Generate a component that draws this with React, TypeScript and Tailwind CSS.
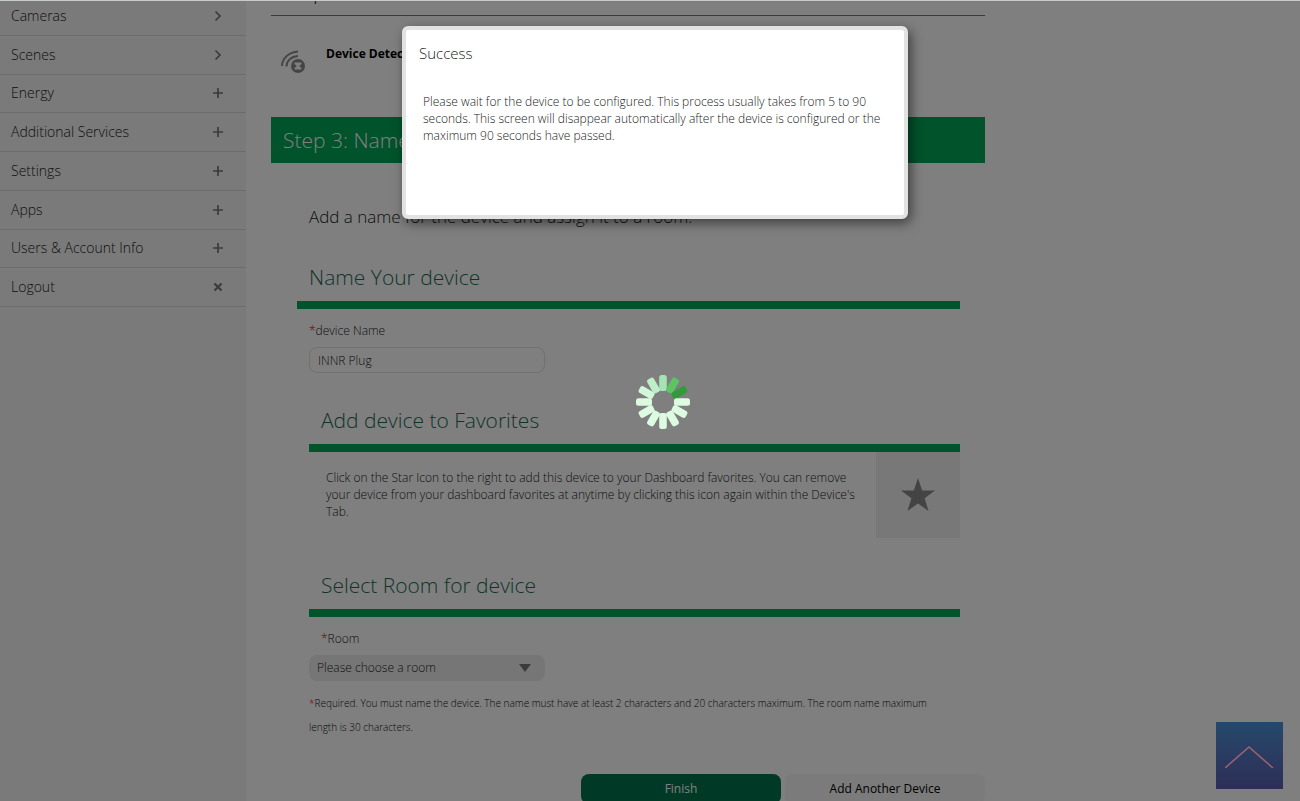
import React from 'react';

type MenuIcon = 'chevron' | 'plus' | 'close';

interface MenuItem {
  label: string;
  icon: MenuIcon;
}

const menuItems: MenuItem[] = [
  { label: 'Cameras', icon: 'chevron' },
  { label: 'Scenes', icon: 'chevron' },
  { label: 'Energy', icon: 'plus' },
  { label: 'Additional Services', icon: 'plus' },
  { label: 'Settings', icon: 'plus' },
  { label: 'Apps', icon: 'plus' },
  { label: 'Users & Account Info', icon: 'plus' },
  { label: 'Logout', icon: 'close' },
];

const iconPaths: Record<MenuIcon, string> = {
  chevron: 'M3.5 1.5 8 6l-4.5 4.5',
  plus: 'M6 1v10M1 6h10',
  close: 'M2.5 2.5l7 7M9.5 2.5l-7 7',
};

// Clockwise from the top, the darkest blade leads
const spinnerColors = [
  '#a6e3b4', '#5cc463', '#339a3c', '#dcfbe0', '#dcfbe0', '#dcfbe0',
  '#dcfbe0', '#dcfbe0', '#dcfbe0', '#dcfbe0', '#d2f7d8', '#bdeec8',
];

const Sidebar: React.FC = () => (
  <nav className="w-[246px] shrink-0 bg-[#f4f4f4]">
    <ul className="-mt-1 flex h-[310px] flex-col">
      {menuItems.map((item) => (
        <li key={item.label} className="flex-1 border-b border-[#d8d8d8]">
          <a href="#" className="flex h-full items-center justify-between pl-[11px] pr-[22px] text-sm font-light text-[#222]">
            {item.label}
            <svg className="h-3 w-3" viewBox="0 0 12 12" fill="none" stroke="#777" strokeWidth={item.icon === 'close' ? 2.2 : 1.7}>
              <path d={iconPaths[item.icon]} />
            </svg>
          </a>
        </li>
      ))}
    </ul>
  </nav>
);

const DetectIcon: React.FC = () => (
  <svg className="mt-[34px] h-6 w-[25px] shrink-0" viewBox="0 0 25 24" fill="none">
    <path d="M1 16C1 8.5 8 2 17 1.5" stroke="#8a8a8a" strokeWidth="2" />
    <path d="M5.500 16.500C5.500 11 10 6.500 17 6" stroke="#8a8a8a" strokeWidth="2" />
    <circle cx="17" cy="16" r="7" fill="#8a8a8a" />
    <path d="M13.500 12.500h7v1.500l-2.300 2 2.300 2v1.500h-7V18l2.300-2-2.300-2z" fill="#fff" />
  </svg>
);

interface SectionTitleProps {
  children: React.ReactNode;
  className?: string;
}

const SectionTitle: React.FC<SectionTitleProps> = ({ children, className = '' }) => (
  <h2 className={`mt-[33px] h-[46px] border-b-8 border-[#00a656] pl-3 text-[21px] leading-7 font-light text-[#1d6b52] ${className}`}>
    {children}
  </h2>
);

const Spinner: React.FC = () => (
  <svg className="h-14 w-14" viewBox="-28 -28 56 56" role="status">
    {spinnerColors.map((color, i) => (
      <rect key={i} x="-3.8" y="-27" width="7.600" height="16" rx="2.500" fill={color} transform={`rotate(${i * 30})`} />
    ))}
  </svg>
);

const DeviceForm: React.FC = () => (
  <main className="ml-[25px] w-full max-w-[714px]">
    <div className="flex h-[15px] items-end overflow-hidden border-b border-[#777] pl-3">
      <h2 className="mb-[10px] text-[21px] leading-7 font-light text-[#222]">Step 2</h2>
    </div>

    <div className="flex h-[101px] gap-5 pl-[10px]">
      <DetectIcon />
      <p className="mt-7 text-xs leading-5 font-bold text-black">Device Detected</p>
    </div>

    <h1 className="bg-[#00a656] px-3 text-[21px] leading-[46px] font-light text-white">
      Step 3: Name Your Device
    </h1>

    <form className="pl-[38px]" onSubmit={(e) => e.preventDefault()}>
      <div className="pr-[25px]">
        <p className="pt-[42px] pb-px text-[17px] leading-6 font-light text-[#222]">
          Add a name for the device and assign it to a room.
        </p>

        <SectionTitle className="-ml-3">Name Your device</SectionTitle>
        <label htmlFor="device-name" className="mt-[13px] block text-xs leading-[17px] font-light text-[#222]">
          <span className="text-red-600">*</span>device Name
        </label>
        <input
          id="device-name"
          type="text"
          defaultValue="INNR Plug"
          className="mt-2 block h-[26px] w-[236px] rounded-lg border border-[#e2e2e2] bg-white px-2 text-xs font-light text-[#222]"
        />

        <SectionTitle>Add device to Favorites</SectionTitle>
        <div className="flex justify-between">
          <p className="max-w-[560px] pt-[17px] pl-[17px] text-xs leading-[17px] font-light text-[#222]">
            Click on the Star Icon to the right to add this device to your Dashboard favorites. You can remove
            your device from your dashboard favorites at anytime by clicking this icon again within the Device's
            Tab.
          </p>
          <button type="button" aria-label="Add to favorites" className="flex h-[86px] w-[84px] shrink-0 items-center justify-center bg-[#f0f0f0]">
            <svg className="h-9 w-9" viewBox="0 0 36 36" fill="#888">
              <path d="M18 1l4.200 12.500H35l-10.400 7.800L28.500 34 18 26.400 7.500 34l3.900-12.700L1 13.500h12.800z" />
            </svg>
          </button>
        </div>

        <SectionTitle>Select Room for device</SectionTitle>
        <label htmlFor="room" className="mt-[13px] block pl-3 text-xs leading-[17px] font-light text-[#222]">
          <span className="text-red-600">*</span>Room
        </label>
        <div className="relative mt-2 w-[236px]">
          <select id="room" className="block h-[26px] w-full appearance-none rounded-lg bg-[#ededed] px-2 text-xs font-light text-[#222]">
            <option>Please choose a room</option>
          </select>
          <svg className="pointer-events-none absolute top-[9px] right-[14px] h-2 w-3" viewBox="0 0 12 8" fill="#777">
            <path d="M0 0h12L6 8z" />
          </svg>
        </div>

        <p className="mt-[10px] pr-5 text-[10px] leading-6 font-light text-[#111]">
          <span className="text-red-600">*</span>Required. You must name the device. The name must have at least 2
          characters and 20 characters maximum. The room name maximum length is 30 characters.
        </p>
      </div>

      <div className="mt-[35px] flex justify-end gap-1">
        <button type="submit" className="h-[30px] w-[200px] rounded-lg bg-[#00724c] text-xs text-white">
          Finish
        </button>
        <button type="button" className="h-[30px] w-[200px] rounded-lg bg-[#f6f6f6] text-xs text-black">
          Add Another Device
        </button>
      </div>
    </form>
  </main>
);

const App: React.FC = () => {
  return (
    <div className="relative flex h-screen overflow-hidden border-t border-[#c6cbc8] bg-white font-['Open_Sans',sans-serif]">
      <Sidebar />
      <DeviceForm />

      {/* Overlay */}
      <div className="absolute inset-0 flex items-center justify-center bg-black/50 pt-0.5 pl-[25px]">
        <Spinner />
      </div>

      {/* Dialog */}
      <div className="absolute inset-x-0 top-[25px] flex justify-center pl-[10px]">
        <section
          role="dialog"
          aria-labelledby="dialog-title"
          className="min-h-[193px] w-[506px] rounded-md border-4 border-[#e2e2e2] bg-white px-[13px] pt-[11px] shadow-[3px_4px_12px_rgba(0,0,0,0.5)]"
        >
          <h2 id="dialog-title" className="text-[15px] leading-6 font-light text-[#222]">Success</h2>
          <p className="mt-7 px-1 text-xs leading-[17px] font-light text-[#222]">
            Please wait for the device to be configured. This process usually takes from 5 to 90 seconds. This
            screen will disappear automatically after the device is configured or the maximum 90 seconds have
            passed.
          </p>
        </section>
      </div>

      {/* Back to top */}
      <a
        href="#"
        aria-label="Back to top"
        className="absolute right-[17px] bottom-3 flex h-[67px] w-[67px] items-center justify-center bg-linear-to-b from-[#24496b] to-[#2d2e57]"
      >
        <svg className="h-6 w-[50px]" viewBox="0 0 50 24" fill="none" stroke="#a06272" strokeWidth="1.500">
          <path d="M0 24 24 3l24 21" />
        </svg>
      </a>
    </div>
  );
};

export default App;
